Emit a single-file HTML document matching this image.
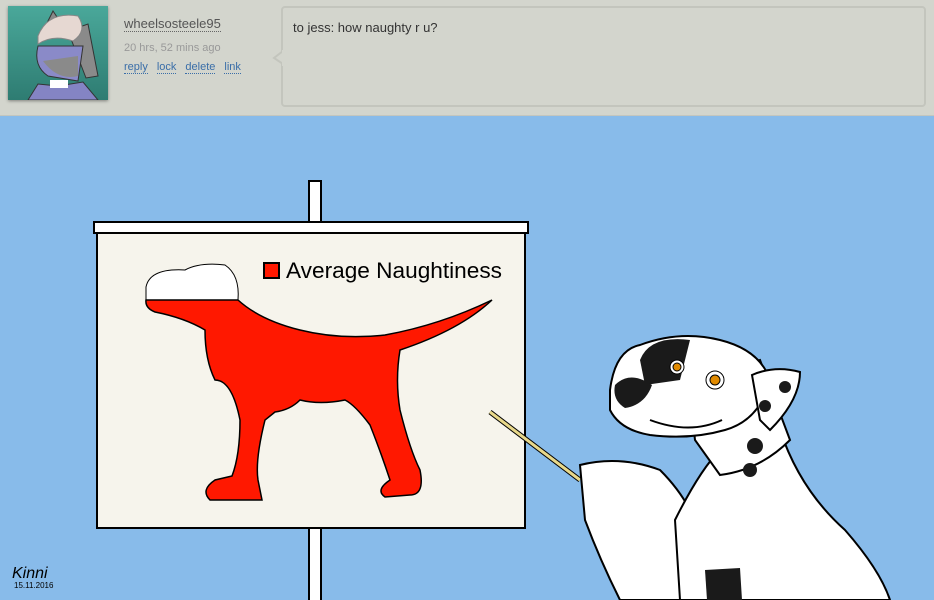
<!DOCTYPE html>
<html><head><style>
html,body{margin:0;padding:0;width:934px;height:600px;overflow:hidden;background:#88bbea;font-family:"Liberation Sans",sans-serif}
.top{position:absolute;left:0;top:0;width:934px;height:115px;background:#d3d5cd;border-bottom:1px solid #c4c6be}
.av{position:absolute;left:8px;top:6px;width:100px;height:94px;background:linear-gradient(#4aa89a,#2e7c72);box-shadow:0 1px 3px rgba(0,0,0,.4);overflow:hidden}
.name{position:absolute;left:124px;top:16px;font-size:13px;color:#555;border-bottom:1px dotted #666;line-height:15px}
.time{position:absolute;left:124px;top:42px;font-size:11px;color:#999}
.links{position:absolute;left:124px;top:61px;font-size:11px;color:#3a6ea8}
.links span{border-bottom:1px dotted #3a6ea8;margin-right:9px}
.bub{position:absolute;left:281px;top:6px;width:645px;height:101px;border:2px solid #c3c5bd;border-radius:4px;box-sizing:border-box;background:#d3d5cd}
.bub .t{position:absolute;left:10px;top:12px;font-size:13px;color:#333}
</style></head><body>
<div class="top">
<div class="av"><svg width="100" height="94">
<path d="M35 25 L45 5 L55 20 Z" fill="#888" stroke="#333"/>
<path d="M60 25 L80 18 L90 70 L78 72 Z" fill="#8a8a8a" stroke="#333"/>
<path d="M30 40 Q25 60 40 70 L70 75 L75 40 Z" fill="#8a8ac8" stroke="#333"/>
<path d="M35 55 Q50 75 70 70 L70 50 Z" fill="#8a8a8a"/>
<path d="M30 30 Q40 5 70 10 Q80 25 65 35 Q45 28 30 38 Z" fill="#e6d8d2" stroke="#888"/>
<path d="M20 94 L30 78 L50 80 L75 76 L90 94 Z" fill="#8484c4" stroke="#333"/>
<rect x="42" y="74" width="18" height="8" fill="#fff"/>
</svg></div>
<div class="name">wheelsosteele95</div>
<div class="time">20 hrs, 52 mins ago</div>
<div class="links"><span>reply</span><span>lock</span><span>delete</span><span>link</span></div>
<div class="bub"><div class="t">to jess: how naughty r u?</div></div>
<svg style="position:absolute;left:272px;top:50px" width="14" height="16"><path d="M11 1 L2 8 L11 14" fill="#d3d5cd" stroke="#c3c5bd" stroke-width="2"/><rect x="10" y="0" width="4" height="16" fill="#d3d5cd"/></svg>
</div>
<svg style="position:absolute;left:0;top:116px" width="934" height="484" viewBox="0 116 934 484">
<rect x="309" y="181" width="12" height="430" fill="#fff" stroke="#000" stroke-width="2"/>
<rect x="97" y="230" width="428" height="298" fill="#f6f4ec" stroke="#000" stroke-width="2"/>
<rect x="94" y="222" width="434" height="11" fill="#fff" stroke="#000" stroke-width="2"/>
<path d="M146 287 Q150 268 185 270 Q200 262 225 265 Q240 275 238 300 L146 300 Z" fill="#fff" stroke="#000"/>
<path d="M146 300 L238 300 Q260 320 300 330 Q340 340 385 335 Q440 325 492 300 Q460 330 400 350 Q395 380 400 410 Q410 450 420 470 Q425 495 410 495 L385 497 Q375 490 390 480 Q380 450 370 425 Q355 405 345 400 Q320 405 300 400 Q290 410 275 412 L265 420 Q255 460 258 480 L262 500 L210 500 Q200 490 215 480 L232 476 Q240 455 240 420 Q232 380 215 380 Q205 360 205 330 Q185 318 155 312 Q145 308 146 300 Z" fill="#ff1800" stroke="#000" stroke-width="1.5"/>
<rect x="264" y="263" width="15" height="15" fill="#ff1800" stroke="#000" stroke-width="2"/>
<text x="286" y="278" font-family="Liberation Sans, sans-serif" font-size="22" textLength="216" lengthAdjust="spacingAndGlyphs" fill="#000">Average Naughtiness</text>
<line x1="490" y1="412" x2="580" y2="480" stroke="#000" stroke-width="5"/>
<line x1="490" y1="412" x2="580" y2="480" stroke="#e8d88a" stroke-width="3"/>
<path d="M580 465 Q620 455 660 470 Q690 500 700 535 L690 600 L620 600 Q600 560 585 520 Z" fill="#fff" stroke="#000" stroke-width="2"/>
<path d="M680 600 L675 520 Q700 470 720 450 L780 430 Q800 490 845 530 Q880 570 890 600 Z" fill="#fff" stroke="#000" stroke-width="2"/>
<path d="M705 570 L740 568 L742 600 L707 600 Z" fill="#1a1a1a"/>
<path d="M695 440 Q690 400 700 380 L760 360 Q775 400 790 440 Q760 470 720 475 Z" fill="#fff" stroke="#000" stroke-width="2"/>
<path d="M610 390 Q615 350 640 345 Q680 330 720 340 Q760 350 770 380 Q760 420 725 430 Q690 440 650 435 Q620 430 610 410 Z" fill="#fff" stroke="#000" stroke-width="2"/>
<path d="M640 360 Q650 335 690 340 L680 380 L645 385 Z" fill="#1a1a1a"/>
<path d="M615 385 Q630 370 652 385 Q645 405 625 408 Q612 400 615 385 Z" fill="#1a1a1a"/>
<path d="M752 375 Q775 365 800 372 Q800 400 770 430 L760 420 Z" fill="#fff" stroke="#000" stroke-width="2"/>
<circle cx="785" cy="387" r="6" fill="#1a1a1a"/><circle cx="765" cy="406" r="6" fill="#1a1a1a"/>
<circle cx="755" cy="446" r="8" fill="#1a1a1a"/><circle cx="750" cy="470" r="7" fill="#1a1a1a"/>
<circle cx="677" cy="367" r="7" fill="#fff" stroke="#000"/><circle cx="677" cy="367" r="4" fill="#e08a00" stroke="#000"/>
<circle cx="715" cy="380" r="9" fill="#fff" stroke="#000"/><circle cx="715" cy="380" r="5" fill="#e08a00" stroke="#000"/>
<path d="M650 420 Q690 435 722 420" fill="none" stroke="#000" stroke-width="2"/>
<text x="12" y="578" font-family="Liberation Sans, sans-serif" font-size="16" font-style="italic" fill="#000">Kinni</text>
<text x="14" y="588" font-family="Liberation Sans, sans-serif" font-size="8" fill="#000">15.11.2016</text>
</svg>
</body></html>
